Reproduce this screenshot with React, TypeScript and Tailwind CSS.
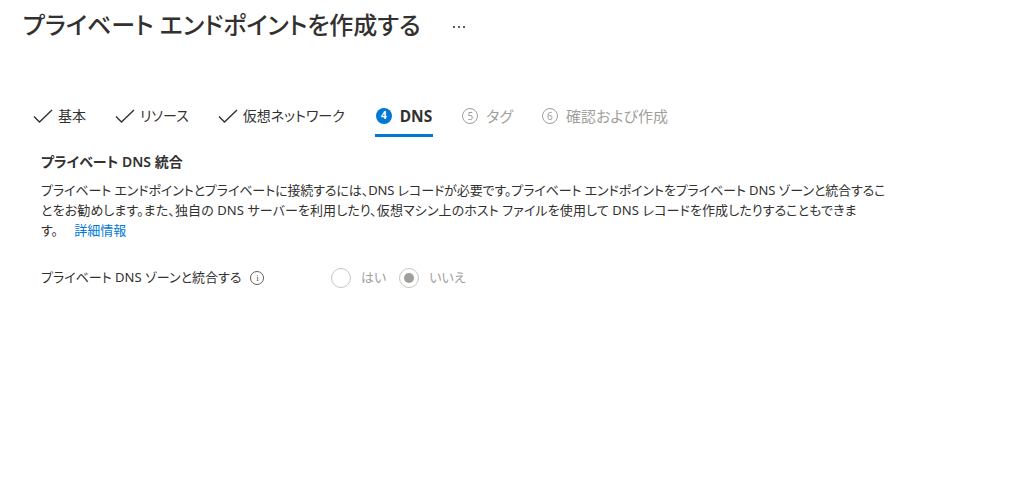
import { useState } from 'react';

const FONT =
  "font-['Noto_Sans','Noto_Sans_CJK_JP',sans-serif] [font-feature-settings:'palt']";

function Check() {
  return (
    <svg width="20" height="14" viewBox="0 0 20 14" fill="none" className="shrink-0">
      <path d="M1 7.5 L6.5 13 L19 1" stroke="#323130" strokeWidth="1.4" />
    </svg>
  );
}

function StepNum({ n, active }: { n: number; active?: boolean }) {
  return active ? (
    <span className="w-[16px] h-[16px] rounded-full bg-[#0078d4] text-white text-[10px] font-bold flex items-center justify-center shrink-0">
      {n}
    </span>
  ) : (
    <span className="w-[16px] h-[16px] rounded-full border border-[#a19f9d] text-[#a19f9d] text-[10px] flex items-center justify-center shrink-0">
      {n}
    </span>
  );
}

const steps = [
  { label: '基本', state: 'done' },
  { label: 'リソース', state: 'done' },
  { label: '仮想ネットワーク', state: 'done' },
  { label: 'DNS', state: 'active', n: 4 },
  { label: 'タグ', state: 'todo', n: 5 },
  { label: '確認および作成', state: 'todo', n: 6 },
];

export default function App() {
  const [integrate, setIntegrate] = useState('no');

  return (
    <div className={`w-[1024px] h-[482px] bg-white text-[#323130] overflow-hidden ${FONT}`}>
      {/* タイトル */}
      <header className="flex items-center pl-[23px] pt-[7px] h-[42px]">
        <h1 className="text-[24px] font-medium leading-[32px]">
          プライベート エンドポイントを作成する
        </h1>
        <div className="ml-[32px] mt-[4px] flex gap-[3px]">
          <span className="w-[2px] h-[2px] bg-[#605e5c]" />
          <span className="w-[2px] h-[2px] bg-[#605e5c]" />
          <span className="w-[2px] h-[2px] bg-[#605e5c]" />
        </div>
      </header>

      {/* ステップ */}
      <nav className="mt-[60px] pl-[33px] flex items-start gap-[29px]">
        {steps.map((s) => (
          <div
            key={s.label}
            className={`flex items-center h-[30px] pb-[2px] ${
              s.state === 'active'
                ? 'border-b-[3px] border-[#0078d4] pl-[1px] pr-[1px] ml-[1px] h-[35px] pb-[5px]'
                : ''
            }`}
          >
            {s.state === 'done' ? <Check /> : <StepNum n={s.n!} active={s.state === 'active'} />}
            <span
              className={`leading-[20px] ${s.state === 'done' ? 'ml-[5px] text-[14px]' : 'ml-[8px]'} ${
                s.state === 'active' ? 'font-bold text-[15.5px]' : ''
              } ${s.state === 'todo' ? 'text-[#a19f9d] text-[15px]' : ''}`}
            >
              {s.label}
            </span>
          </div>
        ))}
      </nav>

      {/* 本文 */}
      <section className="pl-[41px] pt-[15px]">
        <h2 className="text-[14px] font-semibold leading-[20px]">プライベート DNS 統合</h2>
        <div className="mt-[8px] text-[13px] leading-[20px]">
          <p className="whitespace-nowrap tracking-[-0.1px]">
            プライベート エンドポイントとプライベートに接続するには、DNS レコードが必要です。プライベート エンドポイントをプライベート DNS ゾーンと統合するこ
          </p>
          <p className="whitespace-nowrap tracking-[0.1px]">
            とをお勧めします。また、独自の DNS サーバーを利用したり、仮想マシン上のホスト ファイルを使用して DNS レコードを作成したりすることもできま
          </p>
          <p className="whitespace-nowrap">
            す。 <a href="#" className="ml-[13px] text-[#0078d4]">詳細情報</a>
          </p>
        </div>

        <div className="mt-[25px] flex items-center h-[26px]">
          <div className="w-[290px] flex items-center text-[13px]">
            <span>プライベート DNS ゾーンと統合する</span>
            <span className="ml-[9px] w-[14px] h-[14px] rounded-full border border-[#605e5c] flex items-center justify-center text-[9px] leading-none text-[#605e5c] font-serif">
              i
            </span>
          </div>
          <div className="flex items-center gap-[13px] text-[13px] text-[#a19f9d]">
            {[
              { v: 'yes', label: 'はい' },
              { v: 'no', label: 'いいえ' },
            ].map((o) => (
              <button
                key={o.v}
                disabled
                onClick={() => setIntegrate(o.v)}
                className="flex items-center gap-[10px] cursor-default"
              >
                <span className="w-[20px] h-[20px] rounded-full border border-[#c8c6c4] flex items-center justify-center">
                  {integrate === o.v && <span className="w-[10px] h-[10px] rounded-full bg-[#a19f9d]" />}
                </span>
                <span>{o.label}</span>
              </button>
            ))}
          </div>
        </div>
      </section>
    </div>
  );
}
